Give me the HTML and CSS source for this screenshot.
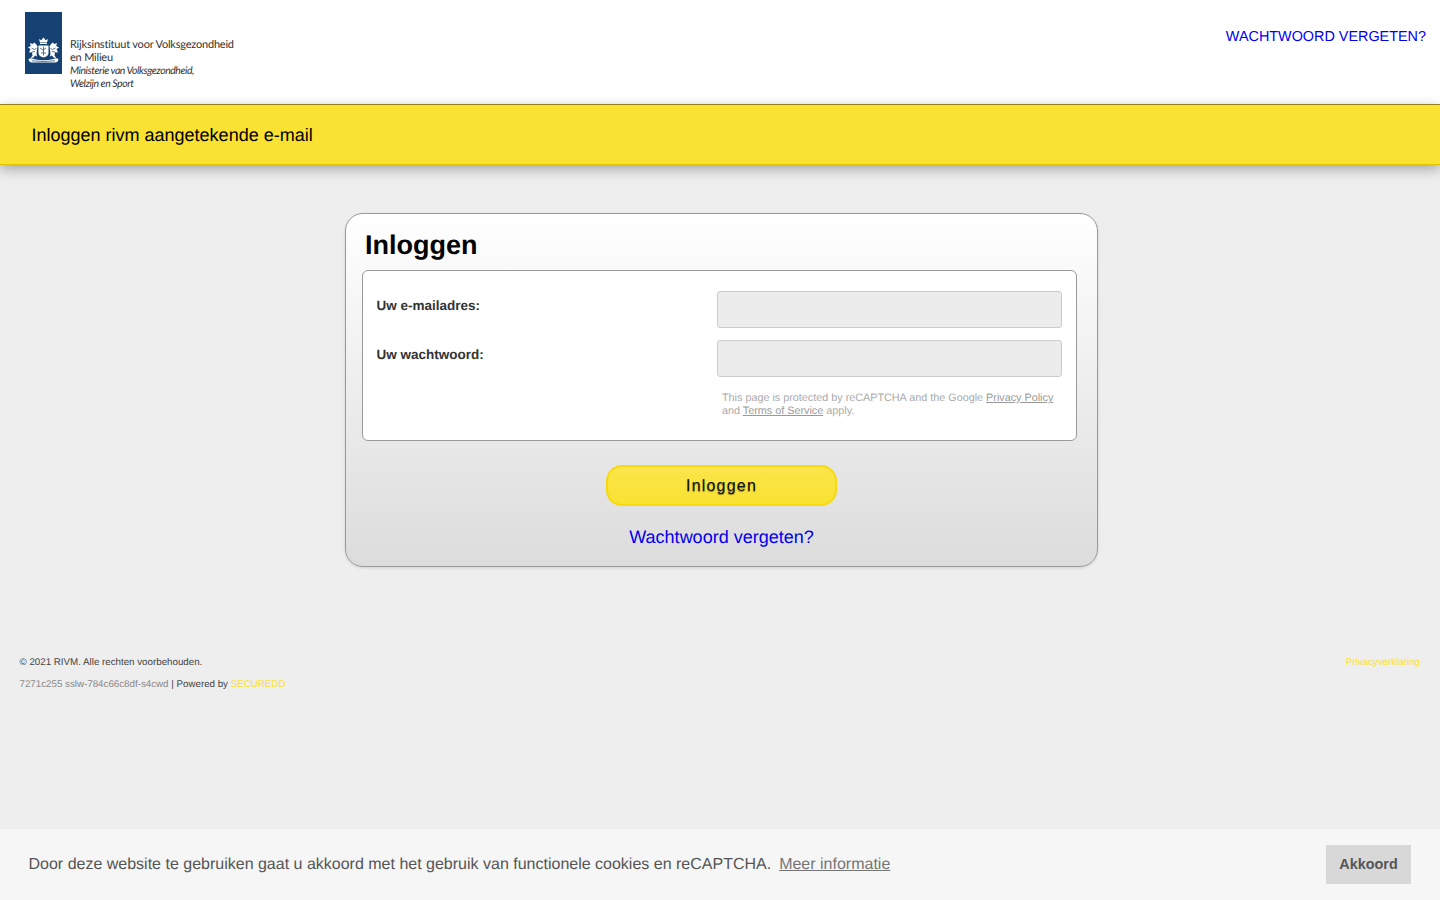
FILE: index.html
```html
<!DOCTYPE html>
<html lang="nl">
<head>
	<title>Inloggen rivm aangetekende e-mail</title>
	<meta charset="utf-8">
	<link rel="stylesheet" href="styles.css">
</head>
<body>
	<header class="top">
		<a class="logo" href="#">
			<svg class="crest" viewBox="0 0 37 62" width="37" height="62">
				<rect width="37" height="62" fill="#154273"/>
				<g fill="#fff">
					<!-- kroon -->
					<path d="M15 30.500l-1-3.500 2.200 1.300 2.300-2.800 2.300 2.800 2.200-1.300-1 3.500z"/>
					<rect x="15" y="31" width="7" height="1"/>
					<!-- schild -->
					<path d="M13.500 33.500h10v7.500q0 3-5 4.500-5-1.500-5-4.500z"/>
					<!-- leeuwen -->
					<path d="M12.500 34l-3-3.500-2 1.500-2.500-1 .8 3-2.800 1.500 2.500 1.500-1.500 3.500 3-.3 .5 3.200-1.800 2.500 2.800-.3 1.500-2.200 2 1-.5-3z"/>
					<path d="M24.500 34l3-3.500 2 1.500 2.500-1-.8 3 2.800 1.500-2.500 1.500 1.500 3.500-3-.3-.5 3.200 1.800 2.500-2.800-.3-1.500-2.200-2 1 .5-3z"/>
					<!-- lint -->
					<path d="M3.500 47q2.500-1.500 5 0 10 2.500 20 0 2.500-1.500 5 0-.5 3.500-3.500 3.500h-23q-3 0-3.500-3.500z"/>
				</g>
				<g fill="none" stroke="#154273" stroke-width=".7">
					<path d="M15 36l3 2 3-2M16 41h5M18.500 34.500v9"/>
					<path d="M6.500 36l3 1.500 2-1M7 40l3-.5M30.500 36l-3 1.500-2-1M30 40l-3-.5"/>
					<path d="M7 48.800q11.500 1.500 23 0"/>
				</g>
			</svg>
			<span class="logo-text">
				<span>Rijksinstituut voor Volksgezondheid</span>
				<span>en Milieu</span>
				<span class="logo-em">Ministerie van Volksgezondheid,</span>
				<span class="logo-em">Welzijn en Sport</span>
			</span>
		</a>
		<a class="forgot-top" href="#">WACHTWOORD VERGETEN?</a>
	</header>

	<div class="titlebar">Inloggen rivm aangetekende e-mail</div>

	<main class="login">
		<h1>Inloggen</h1>
		<form class="panel">
			<div class="row">
				<label for="email">Uw e-mailadres:</label>
				<input id="email" type="text">
			</div>
			<div class="row">
				<label for="password">Uw wachtwoord:</label>
				<input id="password" type="password">
			</div>
			<p class="captcha">This page is protected by reCAPTCHA and the Google <a href="#">Privacy Policy</a> and <a href="#">Terms of Service</a> apply.</p>
		</form>
		<button class="submit" type="button">Inloggen</button>
		<a class="forgot" href="#">Wachtwoord vergeten?</a>
	</main>

	<footer class="foot">
		<div class="foot-row">
			<span>© 2021 RIVM. Alle rechten voorbehouden.</span>
			<a class="yellow" href="#">Privacyverklaring</a>
		</div>
		<div class="foot-row">
			<span><span class="build">7271c255 sslw-784c66c8df-s4cwd</span> | Powered by <a class="yellow" href="#">SECUREDD</a></span>
		</div>
	</footer>

	<div class="cookie">
		<span class="cookie-text">Door deze website te gebruiken gaat u akkoord met het gebruik van functionele cookies en reCAPTCHA.<a href="#">Meer informatie</a></span>
		<button class="cookie-btn" type="button">Akkoord</button>
	</div>
</body>
</html>
```

FILE: styles.css
```css
body{
	margin: 0;
	background-color: #eeeeee;
	font-family: "Liberation Sans", Arial, sans-serif;
	color: #333333;
	text-rendering: geometricPrecision;
}

/* header */
.top{
	height: 104px;
	background-color: #ffffff;
	display: flex;
	justify-content: space-between;
	align-items: flex-start;
	box-sizing: border-box;
	padding: 12px 14px 0 25px;
}
.logo{
	display: flex;
	align-items: flex-start;
	color: #333333;
	text-decoration: none;
}
.crest{
	display: block;
}
.logo-text{
	display: flex;
	flex-direction: column;
	margin: 26px 0 0 8px;
	font-family: Lato, sans-serif;
	font-size: 11px;
	line-height: 13px;
	letter-spacing: -0.2px;
	white-space: nowrap;
}
.logo-em{
	position: relative;
	top: 1px;
	font-size: 10.5px;
	font-style: italic;
	letter-spacing: -0.45px;
}
.forgot-top{
	margin-top: 16px;
	font-size: 14.4px;
	line-height: 18px;
	color: #0000ee;
	text-decoration: none;
}

/* yellow bar */
.titlebar{
	height: 61px;
	box-sizing: border-box;
	border-top: 1px solid #8f8218;
	border-bottom: 1px solid #e0c800;
	background-color: #f9e231;
	padding-left: 31.5px;
	font-size: 18px;
	line-height: 60px;
	color: #000000;
	box-shadow: 0 4px 12px rgba(0,0,0,0.32);
}

/* login box */
.login{
	width: 753px;
	height: 354px;
	box-sizing: border-box;
	margin: 48px 0 0 345px;
	padding: 0 20px 0 16px;
	border: 1px solid #999999;
	border-radius: 18px;
	background: linear-gradient(#ffffff, #dcdcdc);
	display: flex;
	flex-direction: column;
	align-items: center;
	box-shadow: 0 1px 3px rgba(0,0,0,0.12);
}
h1{
	align-self: flex-start;
	margin: 14px 0 0 3px;
	font-size: 27px;
	line-height: 34px;
	color: #000000;
}
.panel{
	width: 715px;
	height: 171px;
	box-sizing: border-box;
	margin-top: 8px;
	padding: 20px 14px 0 13.5px;
	border: 1px solid #999999;
	border-radius: 6px;
	background-color: #ffffff;
}
.row{
	display: flex;
	justify-content: space-between;
	margin-bottom: 12px;
}
label{
	margin-top: 7px;
	font-size: 13.5px;
	line-height: 16px;
	font-weight: bold;
}
input{
	width: 345px;
	height: 37px;
	box-sizing: border-box;
	border: 1px solid #cccccc;
	border-radius: 3px;
	background-color: #ececec;
}
.captcha{
	width: 340px;
	margin: 15px 0 0 345.5px;
	font-size: 10.8px;
	line-height: 13px;
	color: #aaaaaa;
}
.captcha a{
	color: #999999;
}
.submit{
	width: 231px;
	height: 41px;
	margin: 24px 0 0 4px;
	border: 2px solid #f6d90f;
	border-radius: 16px;
	background: linear-gradient(#fbe54a, #f9e231);
	font-family: "Liberation Sans", Arial, sans-serif;
	font-size: 16px;
	letter-spacing: 1.2px;
	color: #111111;
	text-shadow: 0 1px 1px rgba(0,0,0,0.45);
}
.forgot{
	margin: 20px 0 0 4px;
	font-size: 18px;
	line-height: 22px;
	color: #0000ee;
	text-decoration: none;
}

/* footer */
.foot{
	margin-top: 90px;
	padding: 0 20px 0 19.5px;
	font-size: 9.75px;
	color: #444444;
}
.foot-row{
	display: flex;
	justify-content: space-between;
	height: 22px;
	line-height: 12px;
}
.foot a{
	text-decoration: none;
}
.yellow{
	color: #f9e231;
}
.build{
	color: #888888;
}

/* cookie bar */
.cookie{
	position: fixed;
	left: 0;
	right: 0;
	bottom: 0;
	height: 71px;
	box-sizing: border-box;
	padding: 0 29px 0 28.5px;
	background-color: #f6f6f6;
	display: flex;
	justify-content: space-between;
	align-items: center;
	font-size: 16px;
	color: #555555;
}
.cookie-text a{
	margin-left: 8px;
	color: #555555;
	opacity: 0.8;
}
.cookie-btn{
	width: 85px;
	height: 39px;
	padding-bottom: 3px;
	border: 0;
	background-color: #d8d8d8;
	font-family: "Liberation Sans", Arial, sans-serif;
	font-size: 14.4px;
	font-weight: bold;
	color: #555555;
}
```
